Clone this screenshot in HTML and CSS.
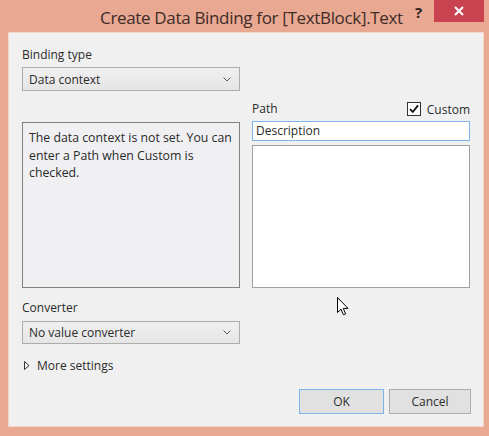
FILE: index.html
```html
<!DOCTYPE html>
<html>
<head>
<meta charset="utf-8">
<link rel="stylesheet" href="styles.css">
</head>
<body>
<div class="window">
  <div class="titlebar">
    <div class="title">Create Data Binding for [TextBlock].Text</div>
    <div class="help">?</div>
    <div class="close">
      <svg width="10" height="10" viewBox="0 0 10 10"><path d="M1 1L9 9M9 1L1 9" stroke="#fff" stroke-width="2"/></svg>
    </div>
  </div>
  <div class="client">
    <div class="label first">Binding type</div>
    <div class="combo combo1">
      <span>Data context</span>
      <svg class="chev" width="8" height="5" viewBox="0 0 8 5"><path d="M0.5 0.5L4 4L7.5 0.5" fill="none" stroke="#5a5a5a" stroke-width="1"/></svg>
    </div>
    <div class="section">
      <div class="pathhead">
        <span class="label">Path</span>
        <span class="custom">
          <span class="check">
            <svg width="12" height="12" viewBox="0 0 12 12"><path d="M2 6.2L4.8 9L10 2.4" fill="none" stroke="#111" stroke-width="1.8"/></svg>
          </span>
          <span>Custom</span>
        </span>
      </div>
      <div class="info">The data context is not set. You can enter a Path when Custom is checked.</div>
      <div class="rightcol">
        <div class="pathbox">Description</div>
        <div class="list"></div>
      </div>
    </div>
    <div class="label conv">Converter</div>
    <div class="combo combo2">
      <span>No value converter</span>
      <svg class="chev" width="8" height="5" viewBox="0 0 8 5"><path d="M0.5 0.5L4 4L7.5 0.5" fill="none" stroke="#5a5a5a" stroke-width="1"/></svg>
    </div>
    <div class="more">
      <svg width="6" height="9" viewBox="0 0 6 9"><path d="M0.5 0.5L5 4.5L0.5 8.5Z" fill="none" stroke="#333" stroke-width="1"/></svg>
      <span>More settings</span>
    </div>
    <div class="buttons">
      <div class="btn ok">OK</div>
      <div class="btn">Cancel</div>
    </div>
    <svg class="cursor" width="12" height="19" viewBox="0 0 12 19"><path d="M0.5 0.5L0.5 15.5L4 12.2L6.4 17.8L8.6 16.9L6.3 11.4L11 11.4Z" fill="#fff" stroke="#000" stroke-width="1" stroke-linejoin="round"/></svg>
  </div>
</div>
</body>
</html>
```

FILE: styles.css
```css
* { box-sizing: border-box; }
html, body { margin: 0; padding: 0; }
body {
  width: 489px;
  height: 436px;
  background: #e9a891;
  font-family: "Open Sans", "Noto Sans", sans-serif;
  color: #2b2b2b;
  overflow: hidden;
}
.window {
  width: 489px;
  height: 436px;
  display: flex;
  flex-direction: column;
  padding: 0 5px 9px 8px;
}
.titlebar {
  height: 32px;
  flex: none;
  position: relative;
}
.title {
  position: absolute;
  left: 92px;
  top: 6px;
  font-size: 17px;
  color: #3e2c27;
  letter-spacing: -0.33px;
  white-space: nowrap;
}
.help {
  position: absolute;
  left: 407px;
  top: 2px;
  font-weight: bold;
  font-size: 15px;
  color: #2f2520;
}
.close {
  position: absolute;
  left: 426px;
  top: 0;
  width: 50px;
  height: 22px;
  background: #c8434f;
  display: flex;
  align-items: center;
  justify-content: center;
}
.client {
  flex: 1;
  background: #f0f0f0;
  border: 1px solid #f6d6cb;
  padding: 14px 12px 0 13px;
  display: flex;
  flex-direction: column;
  position: relative;
  font-size: 12px;
}
.label {
  height: 16px;
  line-height: 16px;
  color: #2b2b2b;
}
.combo {
  margin-top: 4px;
  width: 218px;
  border: 1px solid #acacac;
  background: linear-gradient(#f0f0f0, #e5e5e5);
  display: flex;
  align-items: center;
  justify-content: space-between;
  padding: 0 8px 0 6px;
}
.combo1 { height: 24px; }
.combo2 { height: 23px; }
.section {
  margin-top: 9px;
  display: grid;
  grid-template-columns: 218px 218px;
  grid-template-rows: 21px 167px;
  column-gap: 12px;
}
.pathhead {
  grid-column: 2;
  grid-row: 1;
  display: flex;
  justify-content: space-between;
  align-items: flex-start;
  padding-top: 1px;
}
.custom {
  display: flex;
  align-items: center;
  gap: 6px;
  height: 16px;
}
.check {
  width: 14px;
  height: 14px;
  background: #fff;
  border: 1px solid #333;
  display: flex;
  align-items: center;
  justify-content: center;
}
.info {
  grid-column: 1;
  grid-row: 2;
  margin-top: 1px;
  border: 1px solid #828282;
  background: #f0f0f2;
  padding: 6px 1px 6px 6px;
  line-height: 17.5px;
  font-size: 12.3px;
  color: #2a2a2a;
}
.rightcol {
  grid-column: 2;
  grid-row: 2;
  display: flex;
  flex-direction: column;
  gap: 4px;
}
.pathbox {
  height: 20px;
  border: 1px solid #7eb4ea;
  background: #fff;
  padding: 0 3px;
  line-height: 18px;
}
.list {
  flex: 1;
  border: 1px solid #a0a0a0;
  background: #fff;
}
.conv { margin-top: 12px; }
.combo2 { margin-top: 5px; }
.more {
  margin-top: 13px;
  height: 16px;
  display: flex;
  align-items: center;
  gap: 7px;
  padding-left: 2px;
}
.buttons {
  margin-top: 16px;
  display: flex;
  justify-content: flex-end;
  gap: 5px;
}
.btn {
  width: 82px;
  height: 25px;
  border: 1px solid #adadad;
  background: #e1e1e1;
  display: flex;
  align-items: center;
  justify-content: center;
  color: #2b2b2b;
}
.btn.ok {
  width: 85px;
  border-color: #7eb4ea;
}
.cursor {
  position: absolute;
  left: 328px;
  top: 264px;
}
```
